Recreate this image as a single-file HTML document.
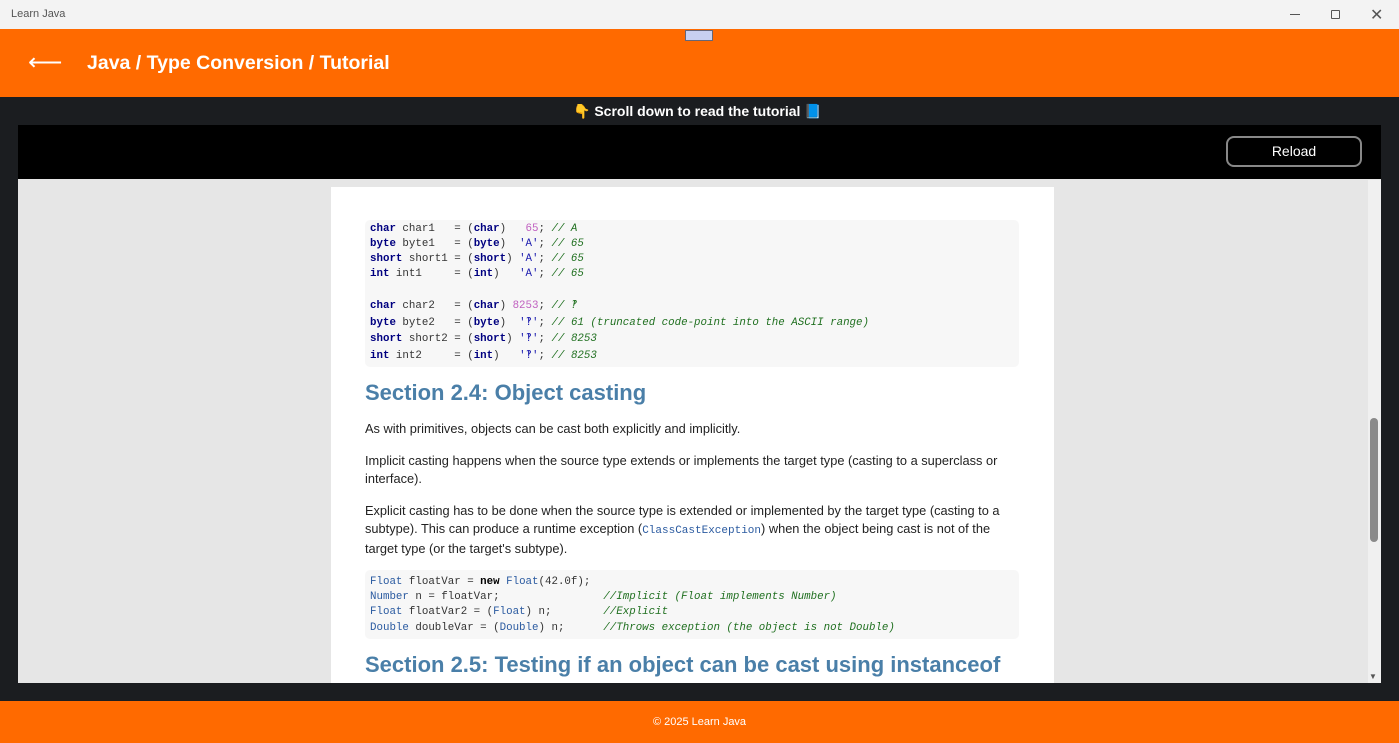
<!DOCTYPE html><html><head><style>
*{margin:0;padding:0;box-sizing:border-box}
body{width:1399px;height:743px;overflow:hidden;background:#1b1d20;font-family:"Liberation Sans",sans-serif;position:relative}
.abs{position:absolute}
.code{font-family:"Liberation Mono",monospace;font-size:10.8px;color:#333;white-space:pre}
.k{color:#000080;font-weight:bold}
.n{color:#c060c0}
.s{color:#2020b0}
.c{color:#207020;font-style:italic}
.t{color:#2a5aa0}
.p{font-size:12.8px;color:#222;line-height:18px}
h2{font-size:22px;color:#4a7fa8;font-weight:bold;position:absolute;left:365px}
</style></head><body>
<div class="abs" style="left:0;top:0;width:1399px;height:29px;background:#f3f3f3"></div>
<div class="abs" style="left:11px;top:8px;font-size:11px;color:#555">Learn Java</div>
<div class="abs" style="left:1290px;top:14px;width:10px;height:1px;background:#555"></div>
<div class="abs" style="left:1331px;top:10px;width:9px;height:9px;border:1px solid #555;border-radius:1px"></div>
<div class="abs" style="left:1370px;top:5px;font-size:16px;color:#555">✕</div>
<div class="abs" style="left:0;top:29px;width:1399px;height:68px;background:#ff6a00"></div>
<div class="abs" style="left:685px;top:30px;width:28px;height:11px;background:#c8d0f0;border:1px solid #667"></div>
<div class="abs" style="left:28px;top:48px;font-size:24px;color:#fff">⟵</div>
<div class="abs" style="left:87px;top:52px;font-size:19.5px;color:#fff;font-weight:bold">Java / Type Conversion / Tutorial</div>
<div class="abs" style="left:573px;top:103px;font-size:14px;color:#fff;font-weight:bold">👇 Scroll down to read the tutorial 📘</div>
<div class="abs" style="left:18px;top:125px;width:1363px;height:54px;background:#000"></div>
<div class="abs" style="left:1226px;top:136px;width:136px;height:31px;border:2px solid #888;border-radius:8px;color:#fff;font-size:14px;text-align:center;line-height:27px">Reload</div>
<div class="abs" style="left:18px;top:179px;width:1363px;height:504px;background:#e6e6e6"></div>
<div class="abs" style="left:1368px;top:180px;width:13px;height:503px;background:#f0f0f0"></div>
<div class="abs" style="left:1370px;top:418px;width:8px;height:124px;background:#8a8a8a;border-radius:4px"></div>
<div class="abs" style="left:1369px;top:672px;font-size:8px;color:#555">▼</div>
<div class="abs" style="left:331px;top:187px;width:723px;height:496px;background:#fff"></div>
<div class="abs" style="left:365px;top:220px;width:654px;height:147px;background:#f7f7f7;border-radius:5px"></div>
<div class="abs code" style="left:370px;top:222px;line-height:15px"><span class="k">char</span> char1   = (<span class="k">char</span>)   <span class="n">65</span>; <span class="c">// A</span>
<span class="k">byte</span> byte1   = (<span class="k">byte</span>)  <span class="s">'A'</span>; <span class="c">// 65</span>
<span class="k">short</span> short1 = (<span class="k">short</span>) <span class="s">'A'</span>; <span class="c">// 65</span>
<span class="k">int</span> int1     = (<span class="k">int</span>)   <span class="s">'A'</span>; <span class="c">// 65</span></div>
<div class="abs code" style="left:370px;top:298px;line-height:16.7px"><span class="k">char</span> char2   = (<span class="k">char</span>) <span class="n">8253</span>; <span class="c">// ‽</span>
<span class="k">byte</span> byte2   = (<span class="k">byte</span>)  <span class="s">'‽'</span>; <span class="c">// 61 (truncated code-point into the ASCII range)</span>
<span class="k">short</span> short2 = (<span class="k">short</span>) <span class="s">'‽'</span>; <span class="c">// 8253</span>
<span class="k">int</span> int2     = (<span class="k">int</span>)   <span class="s">'‽'</span>; <span class="c">// 8253</span></div>
<h2 style="top:380px">Section 2.4: Object casting</h2>
<div class="abs p" style="left:365px;top:420px">As with primitives, objects can be cast both explicitly and implicitly.</div>
<div class="abs p" style="left:365px;top:452px;width:650px">Implicit casting happens when the source type extends or implements the target type (casting to a superclass or interface).</div>
<div class="abs p" style="left:365px;top:502px;width:645px">Explicit casting has to be done when the source type is extended or implemented by the target type (casting to a subtype). This can produce a runtime exception (<span class="code t" style="font-size:11px">ClassCastException</span>) when the object being cast is not of the target type (or the target's subtype).</div>
<div class="abs" style="left:365px;top:570px;width:654px;height:69px;background:#f7f7f7;border-radius:5px"></div>
<div class="abs code" style="left:370px;top:575px;line-height:15.2px"><span class="t">Float</span> floatVar = <span class="k" style="color:#000">new</span> <span class="t">Float</span>(42.0f);
<span class="t">Number</span> n = floatVar;                <span class="c">//Implicit (Float implements Number)</span>
<span class="t">Float</span> floatVar2 = (<span class="t">Float</span>) n;        <span class="c">//Explicit</span>
<span class="t">Double</span> doubleVar = (<span class="t">Double</span>) n;      <span class="c">//Throws exception (the object is not Double)</span></div>
<h2 style="top:652px">Section 2.5: Testing if an object can be cast using instanceof</h2>
<div class="abs" style="left:0;top:701px;width:1399px;height:42px;background:#ff6a00"></div>
<div class="abs" style="left:0;top:716px;width:1399px;text-align:center;color:#fff;font-size:11px">© 2025 Learn Java</div>
</body></html>
